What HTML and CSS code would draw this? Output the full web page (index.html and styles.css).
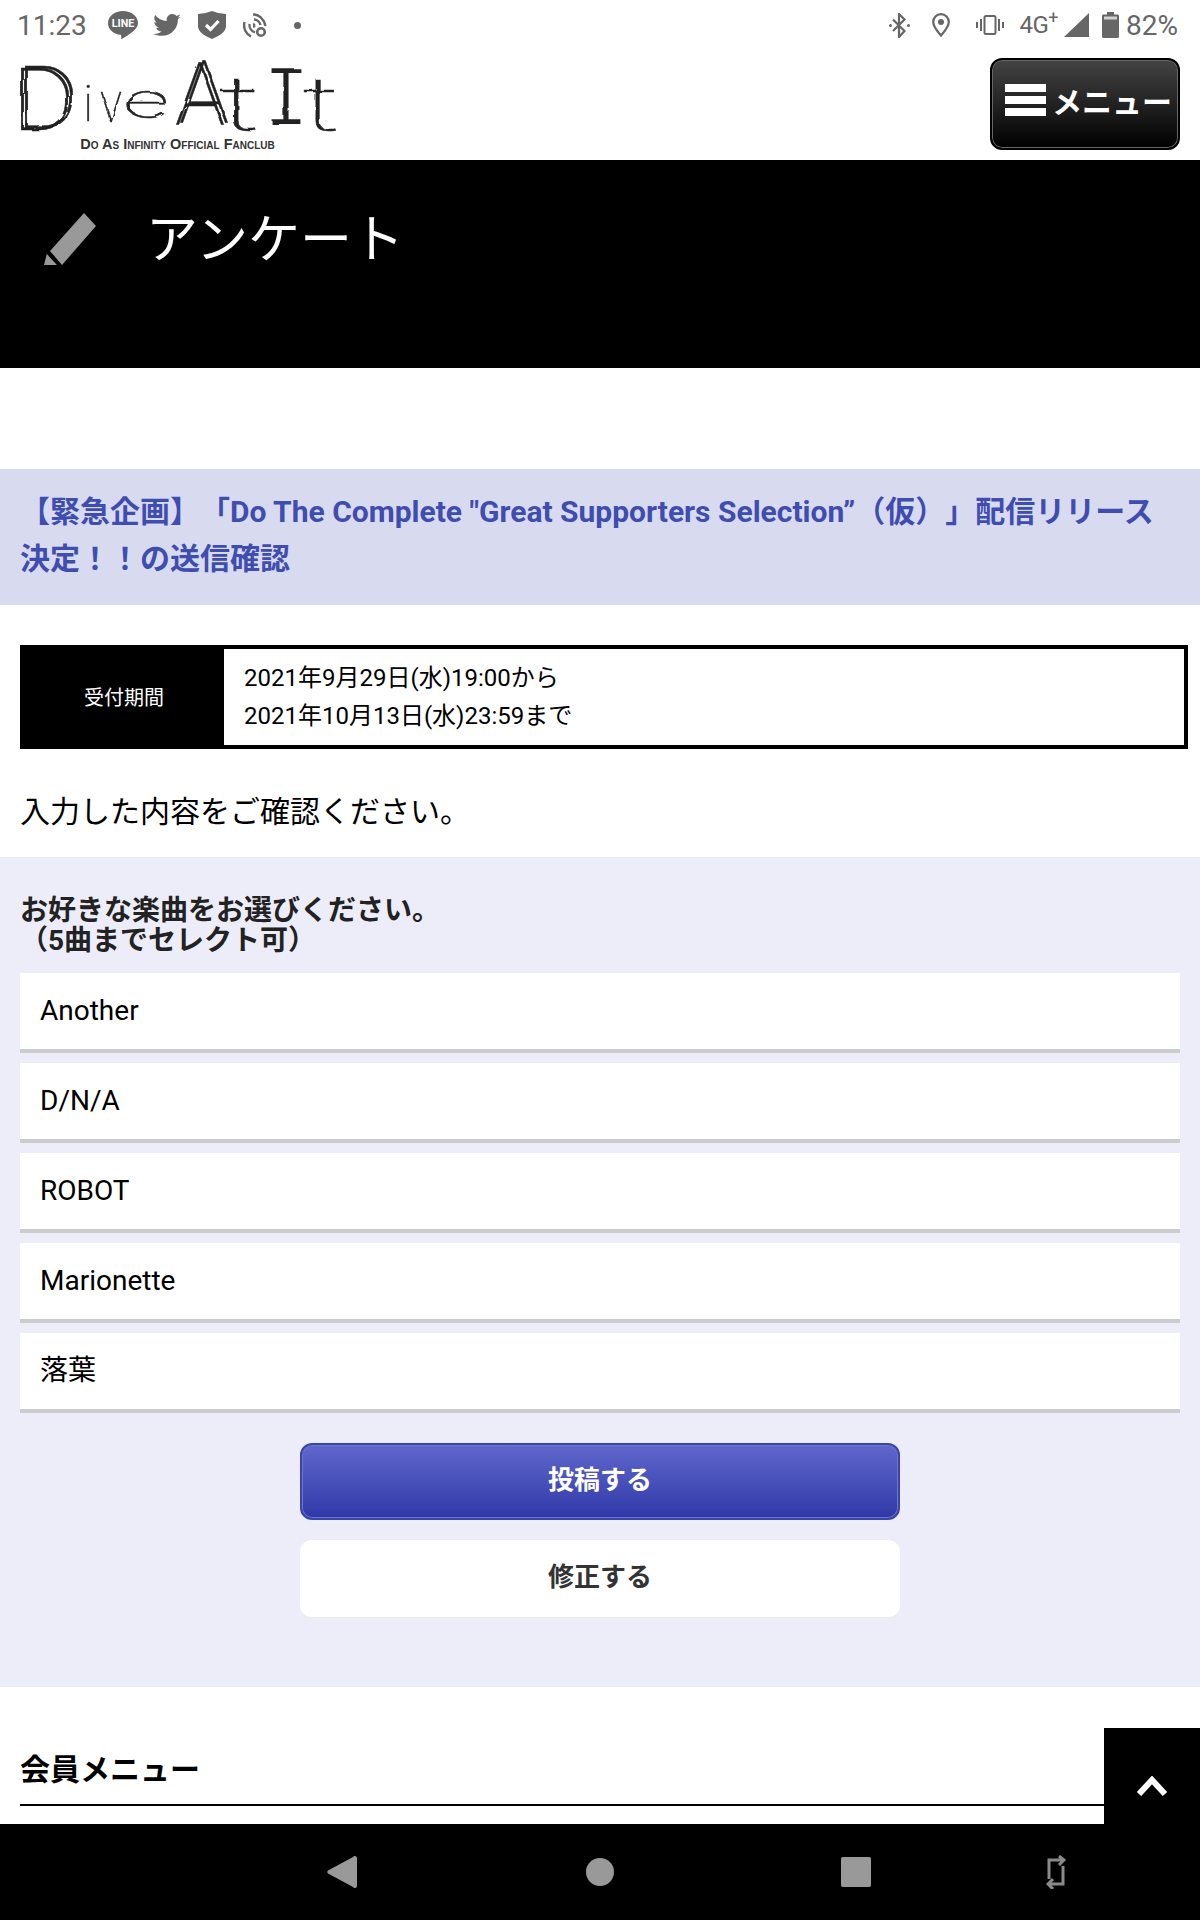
FILE: index.html
```html
<!DOCTYPE html>
<html lang="ja">
<head>
    <meta charset="utf-8">
    <title>アンケート</title>
    <link rel="stylesheet" href="styles.css">
</head>
<body>
    <div class="statusbar">
        <span class="clock">11:23</span>
        <div class="status-left">
            <svg class="ic ic-line" width="30" height="28" viewBox="0 0 28 26"><path class="gr" d="M14 0C6.300 0 0 5 0 11.300 0 17 5 21.300 11.700 22.200c.9.200.7 1 .6 3.300 0 .5.400.7.900.3C18 22.700 28 17.500 28 11.300 28 5 21.700 0 14 0z"/><text x="14" y="15" class="line-txt">LINE</text></svg>
            <svg class="ic" width="28" height="23" viewBox="0 0 24 20"><path class="gr" d="M24 2.400c-.9.400-1.800.7-2.800.8 1-.6 1.800-1.600 2.200-2.700-1 .6-2 1-3.100 1.200C19.300.7 18 .1 16.600.1c-2.700 0-4.900 2.200-4.900 4.900 0 .4 0 .8.100 1.100C7.700 5.900 4.100 4 1.700.9c-.4.700-.7 1.600-.7 2.500 0 1.700.9 3.200 2.200 4.100-.8 0-1.600-.2-2.200-.6v.1c0 2.400 1.700 4.400 3.900 4.800-.4.100-.8.200-1.300.2-.3 0-.6 0-.9-.1.600 2 2.400 3.400 4.600 3.400-1.700 1.300-3.800 2.100-6.100 2.100-.4 0-.8 0-1.200-.1C2.200 18.200 4.800 19 7.500 19c9.100 0 14-7.500 14-14v-.6c1-.7 1.800-1.600 2.500-2z"/></svg>
            <svg class="ic" width="28" height="28" viewBox="0 0 28 28"><path class="gr" d="M0 3Q7 3 14 0 21 3 28 3V15C28 21 21 25 14 28 7 25 0 21 0 15z"/><path d="M8 14l4.500 4.500L20.500 10" fill="none" stroke="#fff" stroke-width="3.200"/></svg>
            <svg class="ic" width="25" height="25" viewBox="0 0 25 25"><g fill="none" stroke="#666" stroke-width="2.400"><path d="M8 23.500C3 21 0 15.500 1.500 9"/><path d="M12 19.500C8.500 18 6 14.500 6.500 11"/><path d="M11.500 14.500C10.800 13 10.800 11.500 11.500 10.500"/><path d="M10 1.500C15.500 1 21 6 22.500 13"/><path d="M11 6.500C14 6.500 16.800 9 17.500 12"/></g><circle cx="18" cy="19" r="3.800" fill="none" stroke="#666" stroke-width="2.600"/></svg>
            <span class="dot"></span>
        </div>
        <div class="status-right">
            <svg class="ic" width="21" height="25" viewBox="0 0 21 25"><path d="M4 6.500L15.500 18 10 24V1l5.500 5.500L4 18" fill="none" stroke="#666" stroke-width="2.200"/><circle cx="1.500" cy="12.500" r="1.500" fill="#666"/><circle cx="19.500" cy="12.500" r="1.500" fill="#666"/></svg>
            <svg class="ic ic-loc" width="18" height="24" viewBox="0 0 18 24"><path d="M9 1.200C4.600 1.200 1.200 4.600 1.200 9c0 5 5 10 7.800 13.500C11.800 19 16.800 14 16.800 9c0-4.400-3.400-7.800-7.800-7.800z" fill="none" stroke="#666" stroke-width="2.200"/><circle cx="9" cy="9" r="3" fill="#666"/></svg>
            <svg class="ic ic-vib" width="28" height="20" viewBox="0 0 28 20"><rect x="8.500" y="1" width="11" height="18" rx="1.500" fill="none" stroke="#666" stroke-width="2"/><path class="gr" d="M0 7h2v6H0zM4 4h2v12H4zM22 4h2v12h-2zM26 7h2v6h-2z"/></svg>
            <span class="net">4G<sup>+</sup></span>
            <svg class="ic" width="25" height="24" viewBox="0 0 25 24"><path class="gr" d="M25 0V24H0z"/></svg>
            <svg class="ic ic-bat" width="17" height="26" viewBox="0 0 17 26"><path class="gr" d="M5 0h7v2.500h3.500c.8 0 1.500.7 1.500 1.500v20.500c0 .8-.7 1.500-1.500 1.500H1.500C.7 26 0 25.300 0 24.500V4c0-.8.700-1.500 1.500-1.500H5z"/><rect x="2" y="4.500" width="13" height="3" fill="#fff" opacity=".7"/></svg>
            <span class="batt">82%</span>
        </div>
    </div>

    <header class="site-head">
        <div class="logo">
            <svg width="325" height="72" viewBox="0 0 325 72">
                <defs>
                    <filter id="scratch" x="-10%" y="-10%" width="120%" height="120%">
                        <feTurbulence type="fractalNoise" baseFrequency="0.07" numOctaves="2" seed="7"/>
                        <feDisplacementMap in="SourceGraphic" scale="4"/>
                        <feGaussianBlur stdDeviation="0.4"/>
                    </filter>
                    <filter id="scratch2" x="-15%" y="-10%" width="130%" height="120%">
                        <feTurbulence type="fractalNoise" baseFrequency="0.05" numOctaves="2" seed="3" result="n"/>
                        <feDisplacementMap in="SourceGraphic" in2="n" scale="4" result="a"/>
                        <feOffset in="a" dx="4" dy="-2" result="b"/>
                        <feMerge result="m"><feMergeNode in="a"/><feMergeNode in="b"/></feMerge>
                        <feGaussianBlur in="m" stdDeviation="0.4"/>
                    </filter>
                    <filter id="thin" x="-10%" y="-10%" width="120%" height="120%">
                        <feMorphology in="SourceGraphic" operator="erode" radius="1" result="e"/>
                        <feTurbulence type="fractalNoise" baseFrequency="0.07" numOctaves="2" seed="5" result="n"/>
                        <feDisplacementMap in="e" in2="n" scale="3"/>
                        <feGaussianBlur stdDeviation="0.4"/>
                    </filter>
                </defs>
                <g class="logo-mark">
                    <text x="-3" y="68" class="logo-d" textLength="62" lengthAdjust="spacingAndGlyphs" filter="url(#scratch2)">D</text>
                    <g filter="url(#scratch)">
                        <text x="68" y="59" class="logo-i">i</text>
                        <text x="85" y="60" class="logo-v" textLength="22" lengthAdjust="spacingAndGlyphs">v</text>
                        <text x="108" y="56" class="logo-e" textLength="46" lengthAdjust="spacingAndGlyphs">e</text>
                    </g>
                    <text x="160" y="63" class="logo-d" textLength="50" lengthAdjust="spacingAndGlyphs" filter="url(#scratch2)">A</text>
                    <g filter="url(#scratch)">
                        <text x="204" y="68" class="logo-t" textLength="42" lengthAdjust="spacingAndGlyphs">t</text>
                        <text x="287" y="68" class="logo-t" textLength="38" lengthAdjust="spacingAndGlyphs">t</text>
                    </g>
                    <text x="248" y="63" class="logo-slab" textLength="46" lengthAdjust="spacingAndGlyphs" filter="url(#thin)">I</text>
                </g>
            </svg>
            <span class="logo-sub">Do As Infinity Official Fanclub</span>
        </div>
        <a class="menu-btn">
            <span class="bars"><i></i><i></i><i></i></span>
            <span>メニュー</span>
        </a>
    </header>

    <div class="page-title">
        <svg width="52" height="52" viewBox="0 0 52 52"><path class="pen" d="M40 0L52 13 18 52 12 45 6 38z"/><path class="pen" d="M3 40L14 52 0 52z"/><path d="M3 39L15 52" stroke="#000" stroke-width="3"/></svg>
        <h1>アンケート</h1>
    </div>

    <h2 class="enq-title">【緊急企画】「Do The Complete "Great Supporters Selection”（仮）」配信リリース決定！！の送信確認</h2>

    <div class="period">
        <div class="period-label">受付期間</div>
        <div class="period-body">2021年9月29日(水)19:00から<br>2021年10月13日(水)23:59まで</div>
    </div>

    <p class="lead">入力した内容をご確認ください。</p>

    <section class="answers">
        <h3>お好きな楽曲をお選びください。<br>（5曲までセレクト可）</h3>
        <ul class="answer-list">
            <li>Another</li>
            <li>D/N/A</li>
            <li>ROBOT</li>
            <li>Marionette</li>
            <li>落葉</li>
        </ul>
        <div class="actions">
            <button class="btn btn-post">投稿する</button>
            <button class="btn btn-fix">修正する</button>
        </div>
    </section>

    <h2 class="member-head">会員メニュー</h2>

    <a class="page-top">
        <svg width="32" height="20" viewBox="0 0 32 20"><path d="M3 18L16 4 29 18" fill="none" stroke="#fff" stroke-width="6"/></svg>
    </a>

    <nav class="navbar">
        <svg class="nav-back" width="30" height="32" viewBox="0 0 30 32"><path class="nav-gr" d="M28 0c1 0 2 1 2 2v28c0 1-1 2-2 2-1 0-1.500-.3-2-1L1 17.500c-1-1-1-2 0-3L26 1c.5-.7 1-1 2-1z"/></svg>
        <span class="nav-home"></span>
        <span class="nav-recent"></span>
        <svg class="nav-rot" width="20" height="34" viewBox="0 0 20 34"><path d="M17 11V29H4M3 24V5H17M13 1l5 4-5 5M7 24l-5 5 5 5" fill="none" stroke="#8a8a8a" stroke-width="3"/></svg>
    </nav>
</body>
</html>
```

FILE: styles.css
```css
* {
    box-sizing: border-box;
}

html, body {
    margin: 0;
    padding: 0;
}

body {
    position: relative;
    width: 1200px;
    height: 1920px;
    overflow: hidden;
    background-color: #fff;
    color: #000;
    font-family: Roboto, "Noto Sans CJK JP", sans-serif;
    text-spacing-trim: space-all;
}

/* status bar */
.statusbar {
    display: flex;
    align-items: center;
    height: 50px;
    padding: 0 22px 0 17px;
    color: #666;
    font-size: 28px;
}

.clock {
    width: 91px;
}

.status-left {
    display: flex;
    align-items: center;
    gap: 17px;
}

.status-right {
    display: flex;
    align-items: center;
    margin-left: auto;
}

.ic {
    display: block;
}

.ic-line {
    margin-right: -2px;
}

.gr {
    fill: #666;
}

.line-txt {
    fill: #fff;
    font-family: Roboto, sans-serif;
    font-size: 10px;
    font-weight: 700;
    text-anchor: middle;
}

.dot {
    width: 7px;
    height: 7px;
    margin-left: 9px;
    border-radius: 50%;
    background-color: #666;
}

.ic-loc {
    margin-left: 22px;
}

.ic-vib {
    margin-left: 26px;
}

.net {
    margin-left: 15px;
    font-size: 24px;
    letter-spacing: -.5px;
}

.net sup {
    font-size: 18px;
    line-height: 0;
}

.net + .ic {
    margin-left: 6px;
}

.ic-bat {
    margin-left: 13px;
}

.batt {
    margin-left: 7px;
}

/* site header */
.site-head {
    display: flex;
    align-items: flex-start;
    justify-content: space-between;
    height: 110px;
    padding: 8px 20px 0 15px;
}

.logo {
    display: flex;
    flex-direction: column;
    align-items: center;
    width: 325px;
    margin-top: 4px;
}

.logo svg {
    display: block;
    flex-shrink: 0;
    overflow: visible;
}

.logo-mark text {
    fill: #222;
    stroke: #222;
    stroke-width: .5;
    font-family: Roboto, sans-serif;
    font-weight: 100;
}

.logo-d {
    font-size: 88px;
}

.logo-i {
    font-size: 50px;
}

.logo-v {
    font-size: 58px;
}

.logo-e {
    font-size: 50px;
}

.logo-t {
    font-size: 76px;
}

.logo-mark .logo-slab {
    font-family: "Liberation Mono", monospace;
    font-size: 88px;
    stroke-width: 0;
}

.logo-sub {
    margin-top: 3px;
    color: #333;
    font-family: "Liberation Sans", sans-serif;
    font-size: 14.500px;
    font-variant: small-caps;
    font-weight: 700;
    line-height: 14px;
    white-space: nowrap;
}

.menu-btn {
    display: flex;
    align-items: center;
    gap: 6px;
    width: 190px;
    height: 92px;
    padding: 0 0 8px 13px;
    border: 2px solid #000;
    border-radius: 12px;
    background: linear-gradient(#444, #000);
    box-shadow: inset 0 0 0 1px #666;
    color: #fff;
    font-size: 30px;
    font-weight: 700;
    white-space: nowrap;
}

.bars {
    display: flex;
    flex-direction: column;
    gap: 4px;
    width: 41px;
    flex-shrink: 0;
}

.bars i {
    display: block;
    height: 8px;
    background-color: #fff;
}

/* page title band */
.page-title {
    display: flex;
    align-items: flex-start;
    gap: 50px;
    height: 208px;
    padding: 53px 0 0 44px;
    background-color: #000;
}

.pen {
    fill: #999;
}

.page-title h1 {
    margin: -8px 0 0;
    color: #fff;
    font-size: 52px;
    font-weight: 400;
    line-height: 72px;
}

.enq-title {
    margin: 101px 0 0;
    padding: 19px 20px 23px;
    background-color: #d8dbf0;
    color: #3f4db0;
    font-size: 30px;
    font-weight: 700;
    line-height: 47px;
}

/* period table */
.period {
    display: flex;
    height: 104px;
    margin: 40px 12px 0 20px;
    border: 4px solid #000;
}

.period-label {
    display: flex;
    align-items: center;
    justify-content: center;
    width: 200px;
    padding-bottom: 2px;
    background-color: #000;
    color: #fff;
    font-size: 20px;
}

.period-body {
    padding: 10px 20px;
    font-size: 24px;
    line-height: 38px;
}

.lead {
    height: 108px;
    margin: 0;
    padding: 41px 20px 0;
    font-size: 30px;
    line-height: 44px;
}

/* answers */
.answers {
    height: 830px;
    padding: 39px 20px 0;
    background-color: #ecedf9;
}

.answers h3 {
    margin: 0 0 17px;
    color: #222;
    font-size: 28px;
    font-weight: 700;
    line-height: 30px;
}

.answer-list {
    display: flex;
    flex-direction: column;
    gap: 10px;
    margin: 0;
    padding: 0;
    list-style: none;
}

.answer-list li {
    height: 80px;
    padding: 0 20px;
    border-bottom: 4px solid #ccc;
    background-color: #fff;
    font-size: 28px;
    line-height: 76px;
}

.actions {
    display: flex;
    flex-direction: column;
    align-items: center;
    gap: 20px;
    margin-top: 30px;
}

.btn {
    display: block;
    width: 600px;
    height: 77px;
    padding: 0 0 9px;
    border-radius: 12px;
    font-family: inherit;
    font-size: 26px;
    font-weight: 700;
}

.btn-post {
    border: 2px solid #3a45a8;
    background: linear-gradient(#6068cc, #3038a8);
    box-shadow: inset 0 0 0 1px #6c75d2;
    color: #fff;
}

.btn-fix {
    border: 0;
    background-color: #fff;
    color: #333;
}

/* bottom */
.member-head {
    height: 119px;
    margin: 0 20px;
    padding-top: 61px;
    border-bottom: 2px solid #000;
    font-size: 30px;
    font-weight: 700;
    line-height: 44px;
}

.page-top {
    position: absolute;
    right: 0;
    top: 1728px;
    display: flex;
    justify-content: center;
    width: 96px;
    height: 100px;
    padding-top: 48px;
    background-color: #000;
}

.navbar {
    position: absolute;
    left: 0;
    top: 1824px;
    width: 1200px;
    height: 96px;
    background-color: #000;
}

.navbar > * {
    position: absolute;
}

.nav-gr {
    fill: #999;
}

.nav-back {
    left: 327px;
    top: 32px;
}

.nav-home {
    left: 586px;
    top: 34px;
    width: 28px;
    height: 28px;
    border-radius: 50%;
    background-color: #999;
}

.nav-recent {
    left: 841px;
    top: 33px;
    width: 30px;
    height: 30px;
    border-radius: 2px;
    background-color: #999;
}

.nav-rot {
    left: 1046px;
    top: 31px;
}
```
